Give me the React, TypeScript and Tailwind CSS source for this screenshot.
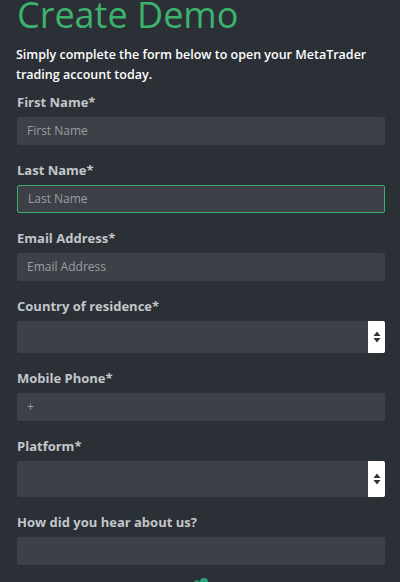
import React from "react";

const font = { fontFamily: '"Open Sans", "Noto Sans", sans-serif' };

function Label({ children }: { children: React.ReactNode }) {
  return (
    <div className="text-[13px] font-bold leading-[18px] text-[#c3c6ca]">{children}</div>
  );
}

function TextInput({ placeholder, focused }: { placeholder?: string; focused?: boolean }) {
  return (
    <div
      className={`mt-[6px] flex h-[28px] items-center rounded-[2px] bg-[#3d4047] pl-[10px] text-[12px] text-[#9a9ea3] ${
        focused ? "border border-[#3fae6c] pl-[9px]" : ""
      }`}
    >
      {placeholder}
    </div>
  );
}

function Arrows() {
  return (
    <svg width="8" height="12" viewBox="0 0 8 12">
      <path d="M4 0.5 L7.5 5 L0.5 5 Z" fill="#333" />
      <path d="M4 11.5 L7.5 7 L0.5 7 Z" fill="#333" />
    </svg>
  );
}

function SelectInput({ h }: { h: string }) {
  return (
    <div className={`mt-[6px] flex ${h} rounded-[2px] bg-[#3d4047]`}>
      <div className="flex-1" />
      <div className="flex w-[17px] items-center justify-center rounded-r-[2px] bg-white">
        <Arrows />
      </div>
    </div>
  );
}

export default function App() {
  return (
    <div style={font} className="h-[582px] w-[400px] overflow-hidden bg-[#2b3036] pl-[16px] pr-[15px]">
      <h1 className="mt-[-9px] pl-[1px] text-[36px] font-normal leading-[48px] text-[#3db26c]">Create Demo</h1>
      <p className="mt-[6px] text-[12.5px] font-semibold leading-[20px] text-white">
        Simply complete the form below to open your MetaTrader trading account today.
      </p>
      <div className="ml-[1px] mt-[8px]">
        <Label>First Name*</Label>
        <TextInput placeholder="First Name" />
        <div className="mt-[16px]">
          <Label>Last Name*</Label>
          <TextInput placeholder="Last Name" focused />
        </div>
        <div className="mt-[16px]">
          <Label>Email Address*</Label>
          <TextInput placeholder="Email Address" />
        </div>
        <div className="mt-[16px]">
          <Label>Country of residence*</Label>
          <SelectInput h="h-[32px]" />
        </div>
        <div className="mt-[16px]">
          <Label>Mobile Phone*</Label>
          <TextInput placeholder="+" />
        </div>
        <div className="mt-[16px]">
          <Label>Platform*</Label>
          <SelectInput h="h-[36px]" />
        </div>
        <div className="mt-[16px]">
          <Label>How did you hear about us?</Label>
          <TextInput />
        </div>
        <div className="mt-[11px] flex justify-center">
          <svg width="18" height="12" viewBox="0 0 18 12">
            <circle cx="5" cy="7" r="3" fill="#1f8f6a" />
            <circle cx="12" cy="6" r="4" fill="#23a77a" />
          </svg>
        </div>
      </div>
    </div>
  );
}
